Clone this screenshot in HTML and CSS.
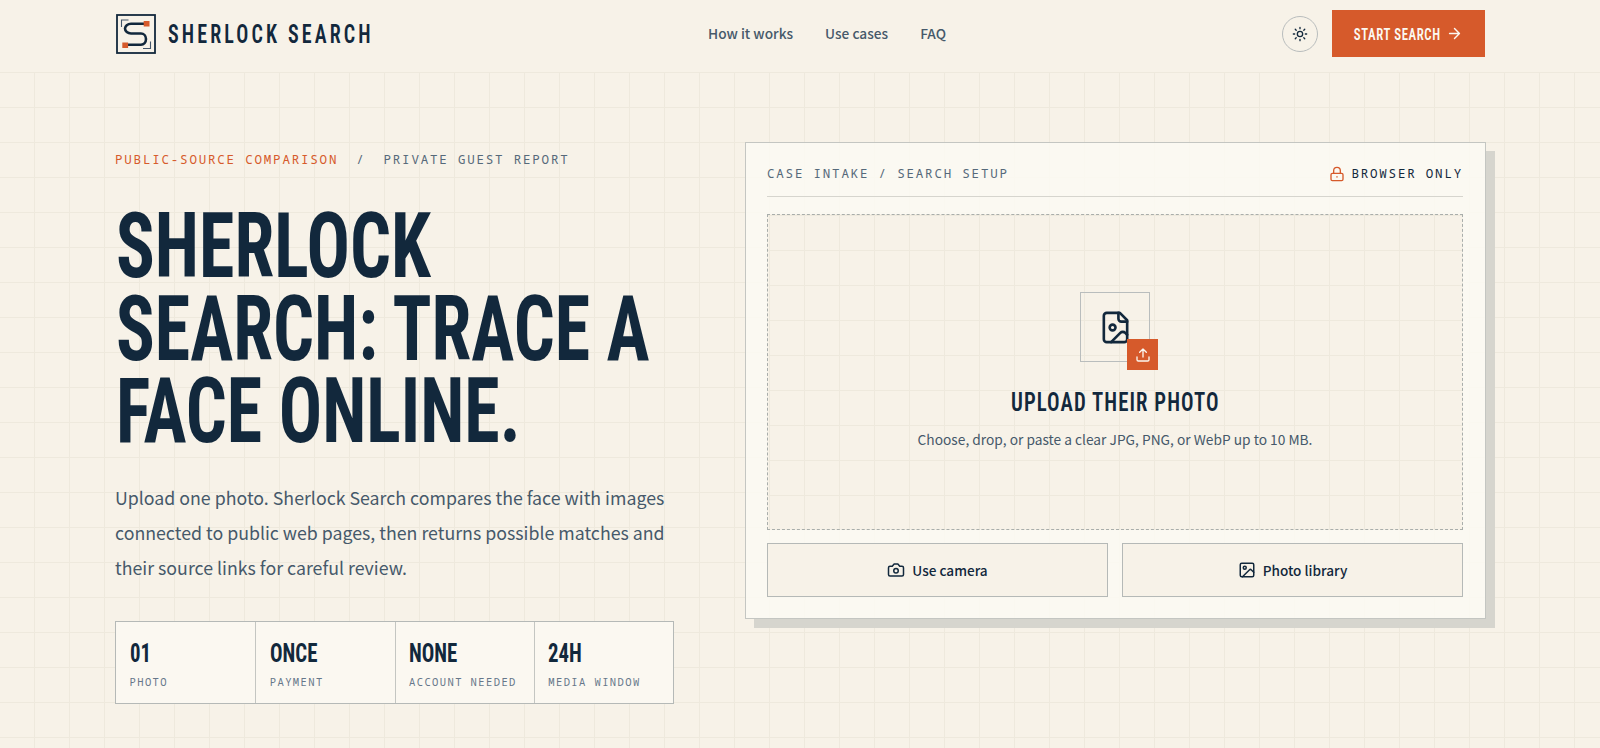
FILE: index.html
```html
<!DOCTYPE html>
<html lang="en">
<head>
    <meta charset="UTF-8">
    <meta name="viewport" content="width=device-width, initial-scale=1.0">
    <title>Sherlock Search</title>
    <link rel="stylesheet" href="styles.css">
</head>
<body>
    <header class="site-header">
        <a href="#" class="brand">
            <svg class="brand-logo" viewBox="0 0 40 40" width="40" height="40" fill="none">
                <rect x="1" y="1" width="38" height="38" fill="#f7f2e8" stroke="#12283c" stroke-width="1.8"/>
                <path d="M5.5 13V6H12.500M34.500 27.500V34.500H27" stroke="#44566a" stroke-width="1.100"/>
                <path d="M29 9.700H15a6 4.900 0 0 0 0 9.800h10a5 5.600 0 0 1 0 11.200H11" stroke="#12283c" stroke-width="2.600"/>
                <rect x="27.700" y="7" width="5.800" height="5.500" fill="#d65a2b"/>
                <rect x="6.300" y="28.500" width="5.800" height="5.500" fill="#d65a2b"/>
            </svg>
            <span class="brand-name">SHERLOCK SEARCH</span>
        </a>
        <nav class="main-nav">
            <a href="#" class="nav-link">How it works</a>
            <a href="#" class="nav-link">Use cases</a>
            <a href="#" class="nav-link">FAQ</a>
        </nav>
        <div class="header-actions">
            <button class="theme-btn" aria-label="Theme">
                <svg viewBox="0 0 24 24" width="16" height="16" fill="none" stroke="#12283c" stroke-width="2" stroke-linecap="round">
                    <circle cx="12" cy="12" r="4"/>
                    <path d="M12 2v2M12 20v2M4.900 4.900l1.400 1.400M17.700 17.700l1.400 1.400M2 12h2M20 12h2M6.300 17.700l-1.400 1.400M19.100 4.900l-1.400 1.400"/>
                </svg>
            </button>
            <a href="#" class="start-btn"><span class="start-label">START SEARCH</span>
                <svg viewBox="0 0 24 24" width="17" height="17" fill="none" stroke="currentColor" stroke-width="2" stroke-linecap="round" stroke-linejoin="round"><path d="M5 12h14M12 5l7 7-7 7"/></svg>
            </a>
        </div>
    </header>

    <main class="hero">
        <section class="hero-copy">
            <p class="eyebrow"><span class="eyebrow-accent">PUBLIC-SOURCE COMPARISON</span><span class="eyebrow-sep">/</span><span>PRIVATE GUEST REPORT</span></p>
            <h1>SHERLOCK SEARCH: TRACE A FACE ONLINE.</h1>
            <p class="lead">Upload one photo. Sherlock Search compares the face with images connected to public web pages, then returns possible matches and their source links for careful review.</p>
            <div class="stats">
                <div class="stat"><strong>01</strong><span>PHOTO</span></div>
                <div class="stat"><strong>ONCE</strong><span>PAYMENT</span></div>
                <div class="stat"><strong>NONE</strong><span>ACCOUNT NEEDED</span></div>
                <div class="stat"><strong>24H</strong><span>MEDIA WINDOW</span></div>
            </div>
        </section>

        <section class="intake-card">
            <div class="card-head">
                <span class="card-title">CASE INTAKE / SEARCH SETUP</span>
                <span class="card-lock">
                    <svg viewBox="0 0 24 24" width="16" height="16" fill="none" stroke="#d65a2b" stroke-width="2" stroke-linecap="round" stroke-linejoin="round"><rect x="3" y="11" width="18" height="11" rx="2"/><path d="M7 11V7a5 5 0 0 1 10 0v4"/><path d="M12 16v.5"/></svg>
                    BROWSER ONLY
                </span>
            </div>
            <div class="drop-zone">
                <div class="file-tile">
                    <svg viewBox="0 0 24 24" width="35" height="35" fill="none" stroke="#12283c" stroke-width="1.800" stroke-linecap="round" stroke-linejoin="round">
                        <path d="M15 2H6a2 2 0 0 0-2 2v16a2 2 0 0 0 2 2h12a2 2 0 0 0 2-2V7z"/>
                        <path d="M14 2v4a2 2 0 0 0 2 2h4"/>
                        <circle cx="10" cy="12" r="2"/>
                        <path d="M20 17l-1.300-1.300a2.400 2.400 0 0 0-3.400 0L9 22"/>
                    </svg>
                    <span class="upload-badge">
                        <svg viewBox="0 0 24 24" width="16" height="16" fill="none" stroke="#fbf8f1" stroke-width="2" stroke-linecap="round" stroke-linejoin="round"><path d="M12 3v12M17 8l-5-5-5 5"/><path d="M21 15v4a2 2 0 0 1-2 2H5a2 2 0 0 1-2-2v-4"/></svg>
                    </span>
                </div>
                <h2>UPLOAD THEIR PHOTO</h2>
                <p>Choose, drop, or paste a clear JPG, PNG, or WebP up to 10 MB.</p>
            </div>
            <div class="card-actions">
                <button class="action-btn">
                    <svg viewBox="0 0 24 24" width="18" height="18" fill="none" stroke="#12283c" stroke-width="2" stroke-linecap="round" stroke-linejoin="round"><path d="M14.500 4h-5L7 7H4a2 2 0 0 0-2 2v9a2 2 0 0 0 2 2h16a2 2 0 0 0 2-2V9a2 2 0 0 0-2-2h-3z"/><circle cx="12" cy="13" r="3"/></svg>
                    Use camera
                </button>
                <button class="action-btn">
                    <svg viewBox="0 0 24 24" width="18" height="18" fill="none" stroke="#12283c" stroke-width="2" stroke-linecap="round" stroke-linejoin="round"><rect x="3" y="3" width="18" height="18" rx="2"/><circle cx="9" cy="9" r="2"/><path d="M21 15l-3.100-3.100a2 2 0 0 0-2.800 0L6 21"/></svg>
                    Photo library
                </button>
            </div>
        </section>
    </main>
</body>
</html>
```

FILE: styles.css
```css
* {
    box-sizing: border-box;
}
body {
    margin: 0;
    height: 748px;
    overflow: hidden;
    background-color: #f7f2e8;
    color: #12283c;
    font-family: "Noto Sans CJK SC", "Noto Sans", sans-serif;
}
a {
    color: inherit;
    text-decoration: none;
}
button {
    font-family: inherit;
    cursor: pointer;
}
.site-header {
    height: 73px;
    padding: 0 115px 5px 116px;
    display: flex;
    justify-content: space-between;
    align-items: center;
    border-bottom: 1px solid #eee9dd;
}
.brand {
    width: 256px;
    display: flex;
    align-items: center;
    gap: 12px;
}
.brand-logo {
    display: block;
    flex: none;
}
.brand-name {
    display: inline-block;
    padding-top: 2px;
    font-family: Roboto, sans-serif;
    font-stretch: 75%;
    font-weight: 600;
    font-size: 25px;
    letter-spacing: 3.9px;
    white-space: nowrap;
    transform: scaleX(0.8);
    transform-origin: left;
}
.main-nav {
    display: flex;
    gap: 32px;
    padding-bottom: 2px;
}
.nav-link {
    font-size: 13.7px;
    font-weight: 500;
    color: #46596a;
}
.header-actions {
    display: flex;
    align-items: center;
    gap: 14px;
}
.theme-btn {
    width: 36px;
    height: 36px;
    padding: 0;
    display: flex;
    align-items: center;
    justify-content: center;
    background: transparent;
    border: 1px solid #b9bdbd;
    border-radius: 50%;
}
.start-btn {
    width: 153px;
    height: 47px;
    display: flex;
    align-items: center;
    justify-content: center;
    gap: 6px;
    background: #d65a2b;
    color: #fbf8f1;
}
.start-label {
    display: inline-block;
    margin: 0 -11px;
    padding-top: 2px;
    font-family: Roboto, sans-serif;
    font-stretch: 75%;
    font-weight: 600;
    font-size: 16px;
    letter-spacing: 0.75px;
    transform: scaleX(0.8);
}
.hero {
    height: 675px;
    padding: 69px 114px 0 115px;
    display: grid;
    grid-template-columns: 559px 741px;
    justify-content: space-between;
    align-items: start;
    background-image:
        linear-gradient(#eee9dd 1px, transparent 1px),
        linear-gradient(90deg, #eee9dd 1px, transparent 1px);
    background-size: 35px 35px;
    background-position: -1px 34px;
}
.eyebrow {
    margin: 8px 0 0;
    font-family: "Noto Sans Mono", monospace;
    font-size: 12.5px;
    line-height: 20px;
    letter-spacing: 1.8px;
    color: #56697a;
    white-space: nowrap;
}
.eyebrow-accent {
    color: #d65a2b;
}
.eyebrow-sep {
    margin: 0 18px;
}
h1 {
    width: 710px;
    margin: 35px 0 0 1px;
    font-family: Roboto, sans-serif;
    font-stretch: 75%;
    font-weight: 700;
    font-size: 91.5px;
    line-height: 82.5px;
    color: #12283c;
    transform: scaleX(0.787);
    transform-origin: left;
}
.lead {
    margin: 27px 0 0;
    font-size: 17.75px;
    line-height: 35.3px;
    color: #46596a;
}
.stats {
    margin-top: 36px;
    display: grid;
    grid-template-columns: repeat(4, 1fr);
    height: 83px;
    background: #fbf8f1;
    border: 1px solid #b5b9b7;
}
.stat {
    padding: 15px 13px 0 13.5px;
    display: flex;
    flex-direction: column;
    border-left: 1px solid #c4c6c2;
}
.stat:first-child {
    border-left: 0;
}
.stat strong {
    display: block;
    width: 125%;
    font-family: Roboto, sans-serif;
    font-stretch: 75%;
    font-weight: 700;
    font-size: 26px;
    line-height: 32px;
    transform: scaleX(0.8);
    transform-origin: left;
}
.stat span {
    margin-top: 5px;
    font-family: "Noto Sans Mono", monospace;
    font-size: 10.5px;
    line-height: 16px;
    letter-spacing: 1.4px;
    color: #66778a;
    white-space: nowrap;
}
.intake-card {
    position: relative;
    height: 477px;
    padding: 17px 22px 22px 21px;
    background: rgba(252, 249, 243, 0.88);
    border: 1px solid #c4c6c2;
    box-shadow: 9px 9px 0 #d6d5ce;
}
.card-head {
    height: 37px;
    padding-bottom: 9px;
    display: flex;
    justify-content: space-between;
    align-items: center;
    border-bottom: 1px solid #d6d5ce;
    font-family: "Noto Sans Mono", monospace;
    font-size: 12.5px;
    letter-spacing: 1.8px;
}
.card-title {
    color: #56697a;
}
.card-lock {
    display: flex;
    align-items: center;
    gap: 6px;
}
.drop-zone {
    margin-top: 17px;
    height: 316px;
    padding-top: 77px;
    display: flex;
    flex-direction: column;
    align-items: center;
    border: 1px dashed #a9aeab;
    background-color: #f7f2e8;
    background-image:
        linear-gradient(#eee9dd 1px, transparent 1px),
        linear-gradient(90deg, #eee9dd 1px, transparent 1px);
    background-size: 35px 35px;
    background-position: 1px 0;
}
.file-tile {
    position: relative;
    width: 70px;
    height: 70px;
    display: flex;
    align-items: center;
    justify-content: center;
    border: 1px solid #b9bdbd;
}
.upload-badge {
    position: absolute;
    right: -9px;
    bottom: -9px;
    width: 31px;
    height: 31px;
    display: flex;
    align-items: center;
    justify-content: center;
    background: #d65a2b;
}
.drop-zone h2 {
    margin: 24px 0 0;
    font-family: Roboto, sans-serif;
    font-stretch: 75%;
    font-weight: 600;
    font-size: 26px;
    line-height: 32px;
    letter-spacing: 1.33px;
    white-space: nowrap;
    transform: scaleX(0.8);
}
.drop-zone p {
    margin: 10px 0 0;
    font-size: 13.75px;
    line-height: 22px;
    color: #46596a;
}
.card-actions {
    margin-top: 13px;
    display: grid;
    grid-template-columns: 1fr 1fr;
    gap: 14px;
}
.action-btn {
    height: 54px;
    padding-bottom: 2px;
    display: flex;
    align-items: center;
    justify-content: center;
    gap: 7px;
    background: #f7f2e8;
    border: 1px solid #b5b9b7;
    color: #12283c;
    font-size: 13.6px;
    font-weight: 500;
}
```
